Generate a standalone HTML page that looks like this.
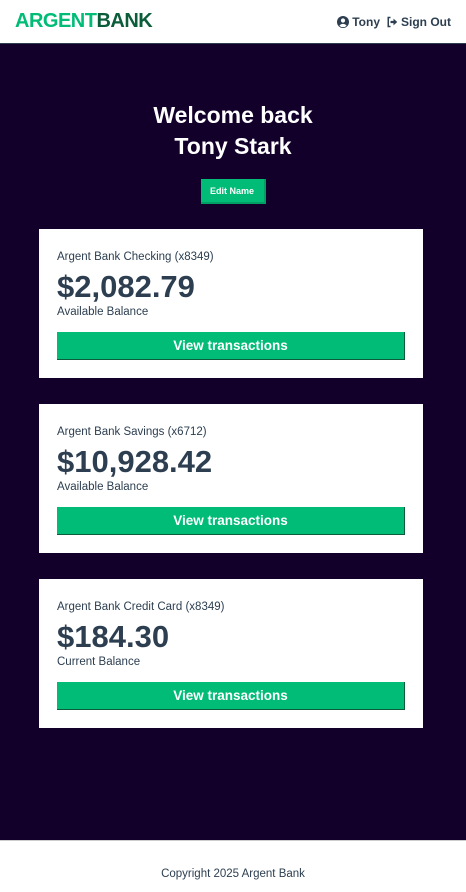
<!DOCTYPE html>
<html><head><meta charset="utf-8"><style>
*{box-sizing:border-box;margin:0;padding:0}
body{width:466px;height:892px;font-family:"Liberation Sans",sans-serif;background:#fff;overflow:hidden}
header{height:44px;display:flex;align-items:center;justify-content:space-between;padding:0 15px;border-bottom:1px solid #2c3e50;background:#fff}
.logo{font-size:20px;font-weight:bold;letter-spacing:-0.5px}
.logo .a{color:#00bc77}.logo .b{color:#0a5c3a}
.nav{font-size:12px;font-weight:bold;color:#2c3e50;display:flex;gap:6px;align-items:center}
.nav span{display:flex;align-items:center;gap:3px}
main{background:#12002b;height:796px;padding-top:56px}
h1{color:#fff;text-align:center;font-size:23px;line-height:31px}
.edit{display:block;margin:17px auto 25px;width:65px;height:25px;background:#00bc77;color:#fff;font-size:9px;font-weight:bold;border:none;border-bottom:2px solid #00a064;border-right:2px solid #00a064}
.card{background:#fff;margin:0 43px 26px 39px;height:149px;padding:21px 18px 0 18px;color:#2c3e50}
.t{font-size:11.5px;line-height:14px}
.amt{font-size:31px;font-weight:bold;line-height:32px;margin-top:7px}
.sub{font-size:11.5px;margin-top:3px}
.btn{margin-top:14px;height:28px;background:#00bc77;color:#fff;font-size:13.5px;font-weight:bold;text-align:center;line-height:27px;border-right:1px solid #0a5c3a;border-bottom:1px solid #0a5c3a}
footer{border-top:1px solid #ccc;height:52px;text-align:center;font-size:11.5px;color:#2c3e50;padding-top:27px}
</style></head><body>
<header><div class="logo"><span class="a">ARGENT</span><span class="b">BANK</span></div>
<div class="nav"><span><svg width="12" height="12" viewBox="0 0 16 16"><circle cx="8" cy="8" r="8" fill="#2c3e50"/><circle cx="8" cy="6" r="2.8" fill="#fff"/><path d="M3.2 13a5.5 5 0 0 1 9.6 0A7 7 0 0 1 3.2 13z" fill="#fff"/></svg>Tony</span>
<span><svg width="12" height="12" viewBox="0 0 16 16"><path d="M6 2H3v12h3" stroke="#2c3e50" stroke-width="2" fill="none"/><path d="M6 6.5h4V3.5l5 4.5-5 4.5v-3H6z" fill="#2c3e50"/></svg>Sign Out</span></div></header>
<main><h1>Welcome back<br>Tony Stark</h1><button class="edit">Edit Name</button>
<div class="card"><div class="t">Argent Bank Checking (x8349)</div><div class="amt">$2,082.79</div><div class="sub">Available Balance</div><div class="btn">View transactions</div></div>
<div class="card"><div class="t">Argent Bank Savings (x6712)</div><div class="amt">$10,928.42</div><div class="sub">Available Balance</div><div class="btn">View transactions</div></div>
<div class="card"><div class="t">Argent Bank Credit Card (x8349)</div><div class="amt">$184.30</div><div class="sub">Current Balance</div><div class="btn">View transactions</div></div>
</main>
<footer>Copyright 2025 Argent Bank</footer>
</body></html>
